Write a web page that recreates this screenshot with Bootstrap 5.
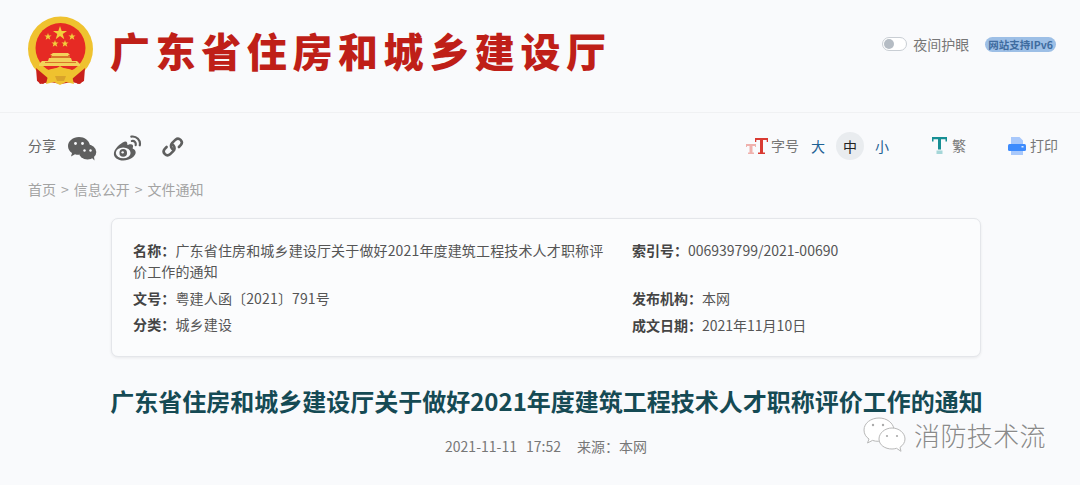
<!DOCTYPE html>
<html lang="zh-CN">
<head>
<meta charset="utf-8">
<title>广东省住房和城乡建设厅</title>
<link href="https://cdn.jsdelivr.net/npm/bootstrap@5.3.0/dist/css/bootstrap.min.css" rel="stylesheet">
<style>
html,body{height:485px;overflow:hidden}
body{background:#f9fafc;font-family:"Noto Sans CJK SC","Noto Sans",sans-serif;color:#666;position:relative}
.site-head{height:113px;padding:16px 0 0 27px;border-bottom:1px solid #f0f1f3}
.site-name{font-size:40px;line-height:68px;font-weight:900;color:#bf1f18;letter-spacing:5.6px;margin:0 0 0 16px;height:70px}
.head-tools{margin-left:auto;padding:0 24px 0 0;height:56px;font-size:14px;color:#777}
.sw-track{width:25px;height:14px;border:1px solid #c9ced4;border-radius:7px;background:#fff;display:block;margin-right:6px;padding:1px}
.sw-dot{width:10px;height:10px;border-radius:50%;background:#b5bcc4;display:block}
.ipv6{font-size:10.500px;line-height:15px;font-weight:700;background:#9dbfe6;color:#3f6c9f;border-radius:8px;padding:0 3px;margin-left:16px;white-space:nowrap}
.tool-row{height:64px;padding:1px 22px 0 28px}
.share-text{font-size:14px;color:#666;margin-right:11px}
.share-ico{width:30px;height:26px;display:block;margin:4px 15px 0 0}
.ttl-ico{margin-right:3px}
.size-text{font-size:14px;color:#777}
.size-lab{margin-right:5px}
.size-opt{width:28px;height:28px;font-size:14px;line-height:28px;text-align:center;border-radius:50%;color:#1f6294}
.size-on{background:#e9ecef;color:#222}
.zh-ico{margin-left:36px;margin-right:5px}
.print-ico{margin-left:42px;margin-right:4px}
.crumbs{font-size:14px;color:#a3a3a3;padding-left:28px;line-height:20px;margin-top:2px;gap:5px}
.info-box{width:870px;height:139px;margin:19px 0 0 111px;background:#fbfcfd;border:1px solid #e4e6ea;border-radius:7px;box-shadow:0 1px 3px rgba(0,0,0,.07);padding:21px 21px 0;font-size:14px;color:#555}
.info-box .info-l{width:499px;padding-right:20px;letter-spacing:.15px}
.info-item{line-height:21px;margin-bottom:5.500px}
.info-item b{font-weight:700;color:#444}
.info-gap{margin-top:27px}
.page-title{font-size:24px;line-height:32px;font-weight:700;color:#154a54;text-align:center;margin:28px 0 0 13px;white-space:nowrap}
.page-meta{font-size:14px;line-height:20px;color:#777;margin:19px 0 0 12px;gap:9px}
.meta-src{margin-left:7px}
.mark-wrap{position:absolute;left:863px;top:415px;display:flex;align-items:center;gap:7px;color:#8a8a8a;font-size:26px;line-height:40px;font-weight:300;letter-spacing:.4px;text-shadow:1px 1px 0 #fff}
</style>
</head>
<body>
<header class="site-head d-flex">
  <svg width="67" height="70" viewBox="0 0 67 70" aria-hidden="true">
    <path d="M10 48l10 6 27 0 10-6 0 16-4 4-8-2-11 2-11-2-10 2-3-4z" fill="#c9201b"/>
    <circle cx="33.500" cy="33" r="32.500" fill="#efc22f"/>
    <circle cx="33.500" cy="32" r="25" fill="#e62a24"/>
    <path d="M33 10l1.700 5h5.300l-4.300 3.100 1.600 5.100-4.300-3.100-4.300 3.100 1.600-5.100-4.300-3.100h5.300z" fill="#f2cf3c"/>
    <path d="M21 17l.9 2.500h2.700l-2.100 1.600.8 2.600-2.300-1.500-2.300 1.500.8-2.600-2.100-1.600h2.700zM45 17l.9 2.500h2.700l-2.100 1.600.8 2.600-2.300-1.500-2.300 1.500.8-2.600-2.100-1.600h2.700zM28 24l.9 2.500h2.700l-2.100 1.600.8 2.600-2.300-1.500-2.300 1.500.8-2.600-2.100-1.600h2.700zM38 24l.9 2.500h2.700l-2.100 1.600.8 2.600-2.300-1.500-2.300 1.500.8-2.600-2.100-1.600h2.700z" fill="#f2cf3c"/>
    <path d="M26 37h15l2 2-2 .6v2.400h3l1 3h5l3 3v2H12v-2l3-3h6l1-3h3v-2.400l-2-.6z" fill="#f3d25a"/>
    <path d="M24 40h19v2H24zM18 46h31v1H18z" fill="#d9762b"/>
    <path d="M9 52l13 11-6 5-6-3zM58 52L45 63l6 5 6-3z" fill="#c9201b"/>
    <path d="M19 56c5-5 9-2 14-6 5 4 9 1 15 6l-3 4 2 8-8-2-6 3-6-3-8 2 2-8z" fill="#efc22f"/>
    <path d="M28 60h11l-2 5h-7z" fill="#d9a32b"/>
  </svg>
  <h1 class="site-name">广东省住房和城乡建设厅</h1>
  <div class="head-tools d-flex align-items-center">
    <span class="sw-track"><span class="sw-dot"></span></span>
    <span>夜间护眼</span>
    <span class="ipv6">网站支持IPv6</span>
  </div>
</header>

<div class="tool-row d-flex align-items-center">
  <span class="share-text">分享</span>
  <svg class="share-ico" viewBox="0 0 30 26" aria-hidden="true">
    <path d="M12 2C6 2 1 6 1 11c0 3 1.600 5.400 4 7l-1 3.500 4-2.200c1.200.4 2.500.6 4 .5-.5-5.300 4.500-9.300 11-9.300C22 5 17.500 2 12 2z" fill="#5f5f5f"/>
    <ellipse cx="20.500" cy="17" rx="8.800" ry="7.600" fill="#5f5f5f"/><path d="M25 23l2.500 2.500-.5-4z" fill="#5f5f5f"/>
    <circle cx="8.500" cy="8.500" r="1.400" fill="#f9fafc"/><circle cx="15.500" cy="8.500" r="1.400" fill="#f9fafc"/>
    <circle cx="17.500" cy="15.500" r="1.200" fill="#f9fafc"/><circle cx="23.500" cy="15.500" r="1.200" fill="#f9fafc"/>
  </svg>
  <svg class="share-ico" viewBox="2 1 26 24" aria-hidden="true">
    <path d="M21 14c-.8-.3-.9-.6-.6-1.400.6-1.500.1-3-2-3.100-1.500 0-3 .7-3 .7 0-1.700-.4-3.200-1.800-3.200-2.500 0-9.600 5.500-10.600 10.100C2 21.800 7 24.500 11.500 24.500c6 0 11.500-3.800 11.500-7.300 0-1.500-1-2.700-2-3.200z" fill="#5f5f5f"/>
    <ellipse cx="11.500" cy="17.500" rx="6.800" ry="5" fill="#f9fafc"/>
    <circle cx="11.500" cy="17.500" r="3.500" fill="#5f5f5f"/><circle cx="11" cy="17" r="1.100" fill="#f9fafc"/>
    <path d="M19 2.500c4.800-.8 8.800 3.200 7.800 8M19.500 6.500c2.500-.4 4 1.500 3.500 3.800" fill="none" stroke="#5f5f5f" stroke-width="2" stroke-linecap="round"/>
  </svg>
  <svg class="share-ico" viewBox="-2 0 30 26" aria-hidden="true">
    <g fill="none" stroke="#5f5f5f" stroke-width="2.600" stroke-linecap="round">
      <path d="M14 14.500l-1-1a3.800 3.800 0 0 1 0-5.300l3.500-3.500a3.800 3.800 0 0 1 5.400 5.300l-2 2"/>
      <path d="M13.500 9.500l1 1a3.800 3.800 0 0 1 0 5.300L11 19.300a3.800 3.800 0 0 1-5.400-5.300l2-2"/>
    </g>
  </svg>
  <div class="ms-auto d-flex align-items-center">
    <svg class="ttl-ico" width="22" height="16" viewBox="0 0 22 16" aria-hidden="true">
      <path d="M0 6h10v3H9V8H6.500v6.500H8V16H2v-1.500h1.500V8H1v1H0z" fill="#efb1ad"/>
      <path d="M9 0h13v4h-1.300V2H17v12.500h2V16h-7v-1.500h2V2h-3.700v2H9z" fill="#d93a32"/>
    </svg>
    <span class="size-text size-lab">字号</span>
    <span class="size-opt">大</span>
    <span class="size-opt size-on mx-1">中</span>
    <span class="size-opt">小</span>
    <svg class="zh-ico" width="15" height="17" viewBox="0 0 15 17" aria-hidden="true">
      <path d="M0 0h15v4.500h-1.500V2.200H9v10.300H6V2.200H1.500v2.300H0z" fill="#178f94"/>
      <path d="M4.500 13.500h6V17h-6z" fill="#a5d6d8"/>
    </svg>
    <span class="size-text">繁</span>
    <svg class="print-ico" width="18" height="18" viewBox="0 0 18 18" aria-hidden="true">
      <path d="M3 0h8.500L15 3.500V7H3zM3 12h12v6H3z" fill="#a8c8fb"/>
      <rect x="0" y="7" width="18" height="7" rx="1.500" fill="#3d8bfd"/>
      <rect x="13.500" y="9" width="2" height="1.500" fill="#dbe9ff"/>
    </svg>
    <span class="size-text">打印</span>
  </div>
</div>

<nav class="crumbs d-flex"><span>首页</span><span>&gt;</span><span>信息公开</span><span>&gt;</span><span>文件通知</span></nav>

<section class="info-box d-flex">
  <div class="info-l">
    <div class="info-item"><b>名称：</b>广东省住房和城乡建设厅关于做好2021年度建筑工程技术人才职称评价工作的通知</div>
    <div class="info-item"><b>文号：</b>粤建人函〔2021〕791号</div>
    <div class="info-item"><b>分类：</b>城乡建设</div>
  </div>
  <div>
    <div class="info-item"><b>索引号：</b>006939799/2021-00690</div>
    <div class="info-item info-gap"><b>发布机构：</b>本网</div>
    <div class="info-item"><b>成文日期：</b>2021年11月10日</div>
  </div>
</section>

<h2 class="page-title">广东省住房和城乡建设厅关于做好2021年度建筑工程技术人才职称评价工作的通知</h2>
<p class="page-meta d-flex justify-content-center"><span>2021-11-11</span><span>17:52</span><span class="meta-src">来源：本网</span></p>

<div class="mark-wrap">
  <svg width="44" height="38" viewBox="0 0 44 38" aria-hidden="true">
    <g fill="#fff" stroke="#b8b8b8" stroke-width="1">
      <path d="M16 2C8 2 1 7 1 14c0 4 2 7 5 9l-1.500 4 5-2.600c2 .7 4 1 6 .9C25 25 31 20 31 13 30 7 24 2 16 2z"/>
      <path d="M29 12c-7 0-13 5-13 11s6 10 13 10c1.500 0 3-.2 4.500-.7l4.500 3-1-4c3-2 5-5 5-8.300 0-6-6-11-13-11z"/>
    </g>
    <circle cx="10" cy="9" r="1.200" fill="#aaa"/><circle cx="20" cy="9" r="1.200" fill="#aaa"/>
    <circle cx="24" cy="20" r="1.100" fill="#aaa"/><circle cx="34" cy="20" r="1.100" fill="#aaa"/>
  </svg>
  <span>消防技术流</span>
</div>
</body>
</html>
